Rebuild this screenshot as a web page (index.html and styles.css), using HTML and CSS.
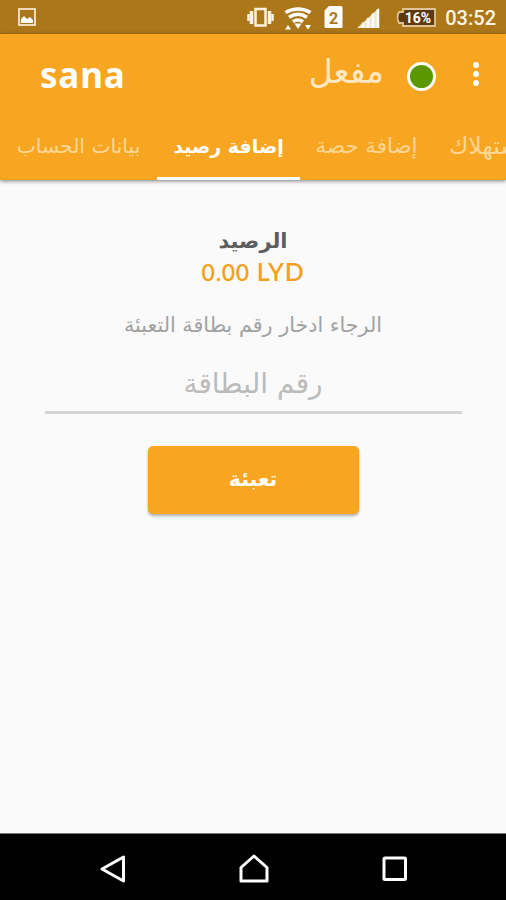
FILE: index.html
```html
<!DOCTYPE html>
<html lang="ar">
<head>
    <meta charset="UTF-8">
    <meta name="viewport" content="width=device-width, initial-scale=1.0">
    <title>sana</title>
    <link rel="stylesheet" href="styles.css">
</head>
<body>
    <div class="status-bar">
        <svg class="picture" width="18" height="18" viewBox="0 0 18 18">
            <rect x="1" y="1" width="16" height="16" fill="none" stroke="#fff3df" stroke-width="1.6"/>
            <path d="M3 15v-4l3-3 3 3 3-2 3 3v3z" fill="#fff"/>
        </svg>
        <svg class="signals" width="189" height="34" viewBox="0 0 189 34">
            <!-- vibrate -->
            <g fill="none" stroke="#fff3e0" stroke-width="2.500">
                <rect x="8.500" y="9" width="10" height="16.500"/>
                <path d="M4.500 11v13M22.500 11v13" stroke-width="3.500"/>
                <path d="M1.500 14v7M25.500 14v7"/>
            </g>
            <!-- wifi -->
            <g fill="none" stroke="#fff" stroke-width="3.500">
                <path d="M38.500 12.500q12.500-7 25 0"/>
                <path d="M42 17.300q9-6 18 0"/>
                <path d="M46 21.800q5-3.500 10 0"/>
            </g>
            <path d="M47.500 23.500h7l-3.500 5.500z" fill="#fff"/>
            <path d="M38 29.500l3-4.500 3 4.500zM58 25h6l-3 4.500z" fill="#fff"/>
            <!-- sim -->
            <path d="M82 6h12q1.500 0 1.500 1.500v19q0 1.500-1.500 1.500h-15q-1.500 0-1.500-1.500v-16z" fill="#fff"/>
            <text x="86.500" y="23.500" class="sim">2</text>
            <!-- network -->
            <path d="M110 28L132 8v20z" fill="#f3e6d0"/>
            <path d="M116 28v-5.500M121 28V18M126 28v-14.500M131 28V9" stroke="#fff" stroke-width="2.500"/>
            <!-- battery -->
            <path d="M156 9h32v17h-32v-3h-4q-3-5.500 0-11h4z" fill="#5e3a10" stroke="#dfc49a" stroke-width="1.800"/>
            <text x="171" y="22.500" class="charge">16%</text>
        </svg>
        <span class="clock">03:52</span>
    </div>

    <div class="header">
        <div class="toolbar">
            <h1>sana</h1>
            <span class="state" dir="rtl">مفعل</span>
            <span class="light"></span>
            <div class="menu"><i></i><i></i><i></i></div>
        </div>
        <div class="tabs">
            <a class="tab account"><span dir="rtl">بيانات الحساب</span></a>
            <a class="tab credit active"><span dir="rtl">إضافة رصيد</span></a>
            <a class="tab quota"><span dir="rtl">إضافة حصة</span></a>
            <a class="tab usage"><span dir="rtl">الاستهلاك</span></a>
        </div>
    </div>

    <div class="content">
        <h2 dir="rtl">الرصيد</h2>
        <div class="amount"><span>0.00</span> LYD</div>
        <p dir="rtl">الرجاء ادخار رقم بطاقة التعبئة</p>
        <input dir="rtl" placeholder="رقم البطاقة">
        <button dir="rtl">تعبئة</button>
    </div>

    <div class="nav-bar">
        <svg width="28" height="30" viewBox="0 0 28 30"><path d="M3 15L24.500 3v24z"/></svg>
        <svg width="32" height="30" viewBox="0 0 32 30"><path d="M3 27V13.500L16 2l13 11.500V27z"/></svg>
        <svg width="28" height="30" viewBox="0 0 28 30"><rect x="3" y="4" width="21.500" height="21.500" rx="1"/></svg>
    </div>
</body>
</html>
```

FILE: styles.css
```css
* {
    box-sizing: border-box;
}
body {
    margin: 0;
    height: 900px;
    display: flex;
    flex-direction: column;
    overflow: hidden;
    background: #fafafa;
    font-family: "DejaVu Sans", sans-serif;
}
.status-bar {
    height: 34px;
    flex: none;
    display: flex;
    align-items: center;
    background: #ab7718;
    padding: 0 10px 0 18px;
}
.signals {
    margin-left: auto;
}
.sim {
    font: bold 16px Roboto, sans-serif;
    fill: #ab7718;
    text-anchor: middle;
}
.charge {
    font: bold 14px Roboto, sans-serif;
    fill: #fff;
    text-anchor: middle;
}
.clock {
    font: 500 20px/34px Roboto, sans-serif;
    color: #fff3e2;
    margin: 2px 0 0 9px;
}
.header {
    position: relative;
    height: 146px;
    flex: none;
    background: #f8a621;
    box-shadow: 0 1px 4px rgba(0, 0, 0, 0.5);
}
.toolbar {
    height: 79px;
    display: flex;
    align-items: center;
    padding: 4px 27px 0 40px;
    color: #fff;
}
h1 {
    margin: 0 auto 2px 0;
    font: bold 35px "Noto Sans", sans-serif;
    letter-spacing: 0.8px;
}
.state {
    font-size: 33px;
    line-height: 40px;
    color: #ffe8c2;
    margin: 0 23px 8px 0;
}
.light {
    width: 29px;
    height: 29px;
    border: 3px solid #fff;
    border-radius: 50%;
    background: #5b9700;
    margin-right: 37px;
    margin-top: 2px;
}
.menu {
    display: flex;
    flex-direction: column;
    gap: 3px;
    margin-bottom: 4px;
}
.menu i {
    width: 6px;
    height: 6px;
    border-radius: 50%;
    background: #fff;
}
.tabs {
    display: flex;
    height: 67px;
    overflow: hidden;
}
.tab {
    flex: none;
    display: flex;
    justify-content: center;
    padding-top: 18px;
    font-size: 20.3px;
    line-height: 30px;
    white-space: nowrap;
    color: #ffd694;
}
.account {
    width: 157px;
}
.credit {
    width: 143px;
}
.quota {
    width: 133px;
    font-size: 21.3px;
}
.usage {
    padding-left: 16px;
    font-size: 23.5px;
}
.active {
    color: #fff;
    font-size: 19px;
    font-weight: bold;
    border-bottom: 3px solid #fff;
}
.content {
    flex: 1;
    display: flex;
    flex-direction: column;
    align-items: center;
    padding: 45px 45px 0;
}
h2 {
    margin: 0;
    font-size: 21px;
    line-height: 32px;
    color: #5d5d60;
}
.amount {
    font: 600 25px/30px Lato, sans-serif;
    color: #f5a01c;
    letter-spacing: 0.7px;
    margin-top: -1px;
}
.amount span {
    font-size: 23px;
}
p {
    margin: 21px 0 0;
    font-size: 20.7px;
    line-height: 34px;
    white-space: nowrap;
    color: #a2a2a2;
}
input {
    width: 417px;
    height: 56px;
    margin-top: 16px;
    padding: 0 0 3px;
    border: 0;
    border-bottom: 3px solid #d5d5d5;
    background: none;
    text-align: center;
    font: 28px "DejaVu Sans", sans-serif;
}
input::placeholder {
    color: #bbb;
}
button {
    width: 211px;
    height: 68px;
    margin-top: 32px;
    padding-bottom: 4px;
    border: 0;
    border-radius: 5px;
    background: #f8a621;
    box-shadow: 0 2px 3px rgba(0, 0, 0, 0.3);
    color: #fff;
    font: bold 20.5px "DejaVu Sans", sans-serif;
}
.nav-bar {
    height: 67px;
    flex: none;
    display: flex;
    align-items: center;
    justify-content: space-between;
    padding: 4px 97px 0 99px;
    background: #000;
    border-top: 1px solid #777;
}
.nav-bar svg {
    fill: none;
    stroke: #fff;
    stroke-width: 3;
    stroke-linejoin: round;
}
```
